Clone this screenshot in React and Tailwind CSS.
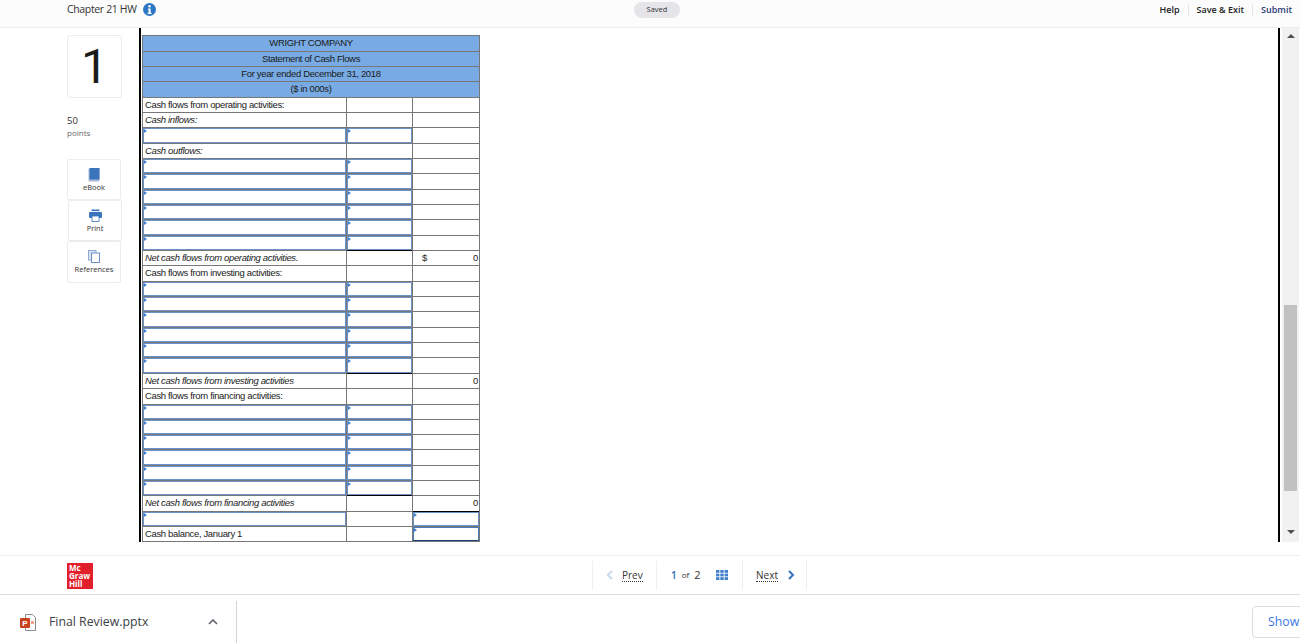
const SANS = "font-['Open_Sans',sans-serif]";
const ARIAL = "font-['Liberation_Sans',Arial,sans-serif]";

const rows = [
  { head: "WRIGHT COMPANY" },
  { head: "Statement of Cash Flows" },
  { head: "For year ended December 31, 2018" },
  { head: "($ in 000s)" },
  { label: "Cash flows from operating activities:" },
  { label: "Cash inflows:", italic: true },
  { input: true },
  { label: "Cash outflows:", italic: true },
  { input: true },
  { input: true },
  { input: true },
  { input: true },
  { input: true },
  { input: true, close: true },
  { label: "Net cash flows from operating activities.", italic: true, dollar: true, total: "0" },
  { label: "Cash flows from investing activities:" },
  { input: true },
  { input: true },
  { input: true },
  { input: true },
  { input: true },
  { input: true, close: true },
  { label: "Net cash flows from investing activities", italic: true, total: "0" },
  { label: "Cash flows from financing activities:" },
  { input: true },
  { input: true },
  { input: true },
  { input: true },
  { input: true },
  { input: true, close: true },
  { label: "Net cash flows from financing activities", italic: true, total: "0", totalClose: true },
  { firstInput: true, lastInput: true },
  { label: "Cash balance, January 1", lastInput: true, dark: true },
];

const heights = [16, 15, 15, 16, 15, 15, 16, 15, 15, 16, 15, 15, 16, 15, 15, 16, 15, 15, 16, 15, 15, 16, 15, 16, 15, 15, 15, 16, 15, 15, 16, 15, 15];

function InputCell({ dark }) {
  return (
    <div className="relative h-full w-full">
      <input
        type="text"
        aria-label="answer"
        className={`block h-full w-full border bg-white outline-none ${dark ? "border-[#4a7ab8] border-b-[#1c3f78]" : "border-[#6b93c9]"}`}
      />
      <span className="absolute left-[1px] top-[1px] h-0 w-0 border-y-[2px] border-l-[3px] border-y-transparent border-l-[#3f7fd0]" />
    </div>
  );
}

function Row({ row, height }) {
  const h = height === 16 ? "h-[16px]" : "h-[15px]";
  if (row.head) {
    return (
      <div className={`${h} flex items-center justify-center border-b border-[#777] bg-[#78abe4] text-[9.5px] tracking-[-0.35px] text-[#1a1a1a]`}>
        {row.head}
      </div>
    );
  }
  return (
    <div className={`${h} flex border-b border-[#777] text-[9.5px] tracking-[-0.35px] text-[#222]`}>
      <div className="flex w-[204px] items-center border-r border-[#777]">
        {row.input || row.firstInput ? (
          <InputCell />
        ) : (
          <span className={`pl-[2px] ${row.italic ? "italic" : ""}`}>{row.label}</span>
        )}
      </div>
      <div className={`w-[66px] border-r border-[#777] ${row.close ? "relative" : ""}`}>
        {row.input && <InputCell />}
        {row.close && <span className="absolute inset-x-0 -bottom-[1px] h-[1px] bg-black" />}
      </div>
      <div className="relative flex flex-1 items-center justify-between pl-[2px] pr-[1px]">
        {row.lastInput ? (
          <div className="-ml-[2px] -mr-[1px] h-full w-[66px]">
            <InputCell dark={row.dark} />
          </div>
        ) : (
          <>
            <span className="pl-[7px]">{row.dollar ? "$" : ""}</span>
            <span>{row.total}</span>
          </>
        )}
        {row.totalClose && <span className="absolute inset-x-0 -bottom-[1px] h-[1px] bg-black" />}
      </div>
    </div>
  );
}

function ToolCard({ label, children, className }) {
  return (
    <div className={`flex w-[54px] flex-col items-center rounded-[2px] border border-[#ececec] pt-[8px] ${className}`}>
      <div className="h-[14px]">{children}</div>
      <span className="mt-[1px] text-[7.5px] leading-[9px] text-[#333]">{label}</span>
    </div>
  );
}

function Sidebar() {
  return (
    <div className={`w-[139px] shrink-0 pl-[67px] pt-[7px] ${SANS}`}>
      <div className="flex h-[63px] w-[55px] items-center justify-center rounded-[3px] border border-[#ececec] text-[48px] leading-none text-[#1a1a1a]">
        <span className="font-['Roboto',sans-serif]">1</span>
      </div>
      <p className="mt-[17px] text-[9.5px] leading-[12px] text-[#333]">50</p>
      <p className="text-[8px] leading-[12px] text-[#666]">points</p>
      <div className="mt-[20px]">
        <ToolCard label="eBook" className="h-[41px]">
          <svg width="12" height="14" viewBox="0 0 12 14">
            <rect x="0.5" y="0.5" width="11" height="13" rx="1" fill="#a9b8d8" />
            <rect x="1.5" y="0" width="10" height="11.5" fill="#3a74bd" />
          </svg>
        </ToolCard>
        <ToolCard label="Print" className="ml-[1px] h-[41px]">
          <svg width="13" height="13" viewBox="0 0 13 13">
            <rect x="2.5" y="0.5" width="8" height="1.6" fill="#3a74bd" />
            <rect x="0" y="3" width="13" height="6" rx="1" fill="#3a74bd" />
            <rect x="3" y="7" width="7" height="5.5" fill="#fff" stroke="#3a74bd" strokeWidth="0.8" />
          </svg>
        </ToolCard>
        <ToolCard label="References" className="h-[42px]">
          <svg width="12" height="13" viewBox="0 0 12 13">
            <rect x="0.5" y="0.5" width="7.5" height="9.5" fill="#dbe5f3" stroke="#8fa9d6" />
            <rect x="3.5" y="3" width="8" height="9.5" fill="#fff" stroke="#6b8fc9" />
          </svg>
        </ToolCard>
      </div>
    </div>
  );
}

function Header() {
  return (
    <header className={`flex h-[28px] shrink-0 items-start border-b border-[#ececec] bg-[#fcfcfc] ${SANS}`}>
      <div className="flex h-[19px] w-[634px] items-center pl-[67px] text-[10.5px] tracking-[-0.35px] text-[#333]">
        Chapter 21 HW
        <svg className="ml-[6px]" width="13" height="13" viewBox="0 0 13 13">
          <circle cx="6.5" cy="6.5" r="6.5" fill="#2e77c4" />
          <circle cx="6.5" cy="3.2" r="1.2" fill="#fff" />
          <path d="M5 5.4h2.6v4.4h1v1.2H4.6V9.8h1V6.6H5z" fill="#fff" />
        </svg>
      </div>
      <div className="mt-[2px] flex h-[16px] w-[46px] items-center justify-center rounded-full bg-[#e5e5e9] text-[7.5px] text-[#333]">
        Saved
      </div>
      <nav className="ml-auto flex h-[20px] items-center pr-[8px] text-[9px] font-semibold text-[#222]">
        <span>Help</span>
        <span className="mx-[8px] h-[12px] w-px bg-[#e5e5e5]" />
        <span>Save &amp; Exit</span>
        <span className="mx-[8px] h-[12px] w-px bg-[#e5e5e5]" />
        <span className="text-[#2b3a78]">Submit</span>
      </nav>
    </header>
  );
}

function Scrollbar() {
  return (
    <div className="ml-[2px] flex h-full w-[17px] flex-col items-center bg-[#f1f1f1]">
      <span className="mt-[6px] h-0 w-0 border-x-[4px] border-b-[4px] border-x-transparent border-b-[#505050]" />
      <div className="mt-[267px] h-[186px] w-[13px] bg-[#c1c1c1]" />
      <span className="mt-[39px] h-0 w-0 border-x-[4px] border-t-[4px] border-x-transparent border-t-[#505050]" />
    </div>
  );
}

function Pager() {
  return (
    <div className={`ml-[499px] flex h-[29px] items-center text-[#333] ${SANS}`}>
      <div className="flex h-full w-[65px] items-center border-x border-[#efefef] pl-[13px]">
        <svg width="7" height="10" viewBox="0 0 7 10" fill="none" stroke="#c9d9ee" strokeWidth="2"><path d="M6 1 2 5l4 4" /></svg>
        <span className="ml-[9px] border-b border-dotted border-[#333] text-[10px] leading-[12px]">Prev</span>
      </div>
      <div className="flex h-full w-[86px] items-center border-r border-[#efefef] pl-[14px]">
        <span className="text-[10px] font-semibold text-[#2e6fb7]">1</span>
        <span className="ml-[5px] text-[8px]">of</span>
        <span className="ml-[5px] text-[11px]">2</span>
        <svg className="ml-[15px]" width="12" height="10" viewBox="0 0 12 10" fill="#3f7fcb">
          <rect width="3.4" height="2.8" /><rect x="4.3" width="3.4" height="2.8" /><rect x="8.6" width="3.4" height="2.8" />
          <rect y="3.6" width="3.4" height="2.8" /><rect x="4.3" y="3.6" width="3.4" height="2.8" /><rect x="8.6" y="3.6" width="3.4" height="2.8" />
          <rect y="7.2" width="3.4" height="2.8" /><rect x="4.3" y="7.2" width="3.4" height="2.8" /><rect x="8.6" y="7.2" width="3.4" height="2.8" />
        </svg>
      </div>
      <div className="flex h-full w-[64px] items-center border-r border-[#efefef] pl-[13px]">
        <span className="border-b border-dotted border-[#333] text-[10px] leading-[12px]">Next</span>
        <svg className="ml-[10px]" width="7" height="10" viewBox="0 0 7 10" fill="none" stroke="#3a74bd" strokeWidth="2"><path d="m1 1 4 4-4 4" /></svg>
      </div>
    </div>
  );
}

function DownloadBar() {
  return (
    <div className={`flex h-[49px] shrink-0 items-center overflow-hidden border-t border-[#dcdcdc] bg-white pt-[6px] ${SANS}`}>
      <svg className="ml-[20px] shrink-0" width="16" height="17" viewBox="0 0 16 17">
        <path d="M5.5.5h7l3 3v13h-10z" fill="#fff" stroke="#8a8a8a" />
        <rect x="0" y="4" width="10" height="10" rx="1" fill="#c8411f" />
        <text x="5" y="12" textAnchor="middle" fontSize="8" fontWeight="700" fill="#fff" fontFamily="Liberation Sans">P</text>
        <path d="M11 7h3v3h-3z" fill="#f2a58c" />
      </svg>
      <span className="ml-[13px] w-[159px] shrink-0 text-[12.3px] text-[#3c4043]">Final Review.pptx</span>
      <svg className="shrink-0" width="10" height="6" viewBox="0 0 10 6" fill="none" stroke="#5f6368" strokeWidth="1.6"><path d="m1 5 4-4 4 4" /></svg>
      <div className="ml-[18px] h-full w-px shrink-0 bg-[#d5d5d5]" />
      <div className="ml-[1015px] flex h-[32px] w-[70px] shrink-0 items-center rounded-[4px] border border-[#dadce0] pl-[15px] text-[12.3px] font-medium text-[#3b78e7]">
        Show
      </div>
    </div>
  );
}

export default function App() {
  return (
    <div className="flex h-[643px] w-[1300px] flex-col overflow-hidden bg-white">
      <Header />
      <main className="flex h-[514px] shrink-0">
        <Sidebar />
        <div className="h-full w-[1141px] border-x-2 border-black pl-[1px] pt-[7px]">
          <div className={`w-[338px] border-x border-t border-[#777] ${ARIAL}`}>
            {rows.map((row, i) => (
              <Row key={i} row={row} height={heights[i]} />
            ))}
          </div>
        </div>
        <Scrollbar />
      </main>
      <footer className="mt-[13px] flex h-[39px] shrink-0 items-center border-t border-[#eeeeee]">
        <div className={`ml-[67px] mt-[2px] flex h-[26px] w-[26px] flex-col justify-center bg-[#e2202c] pl-[2px] text-[8px] font-bold leading-[8px] text-white ${SANS}`}>
          <span>Mc</span>
          <span>Graw</span>
          <span>Hill</span>
        </div>
        <Pager />
      </footer>
      <DownloadBar />
    </div>
  );
}
